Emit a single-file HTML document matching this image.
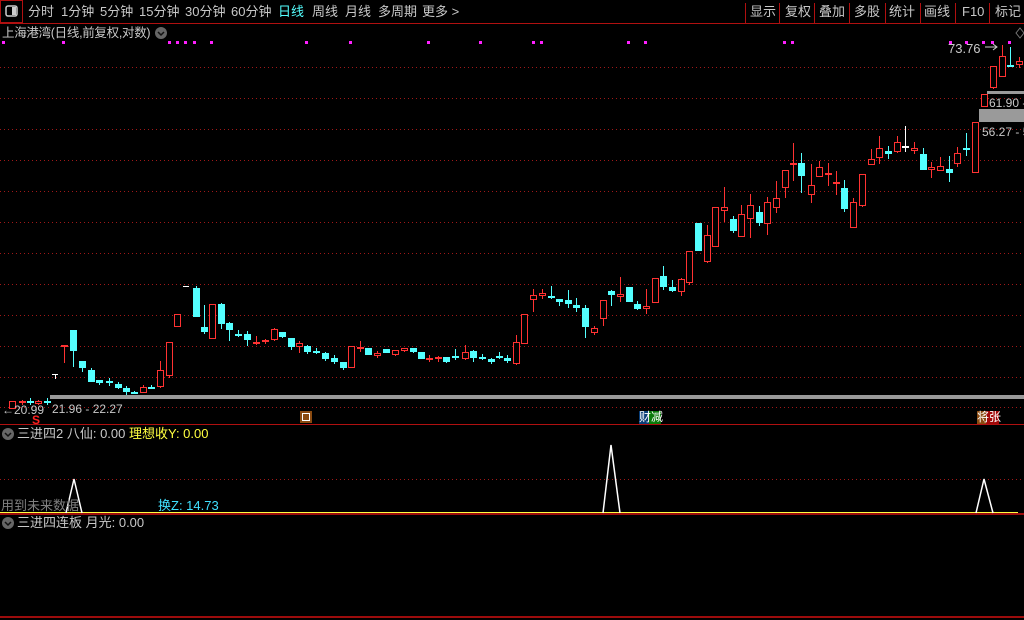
<!DOCTYPE html>
<html><head><meta charset="utf-8"><style>
html,body{margin:0;padding:0;background:#000;width:1024px;height:620px;overflow:hidden}
body{position:relative;font-family:"Liberation Sans","Noto Sans CJK SC",sans-serif;font-size:12px;color:#c8c8c8}
.t{position:absolute;white-space:nowrap;line-height:14px}
.m{top:5px;font-size:13px;color:#c8c8c8}
svg{position:absolute;left:0;top:0}
</style></head><body>
<svg width="1024" height="620" id="s" xmlns="http://www.w3.org/2000/svg">
<g stroke="#a01818" stroke-width="1" stroke-dasharray="1,3">
<line x1="0" y1="67.5" x2="1024" y2="67.5"/><line x1="0" y1="98.5" x2="1024" y2="98.5"/>
<line x1="0" y1="129.5" x2="1024" y2="129.5"/><line x1="0" y1="160.5" x2="1024" y2="160.5"/>
<line x1="0" y1="191.5" x2="1024" y2="191.5"/><line x1="0" y1="222.5" x2="1024" y2="222.5"/>
<line x1="0" y1="253.5" x2="1024" y2="253.5"/><line x1="0" y1="284.5" x2="1024" y2="284.5"/>
<line x1="0" y1="315.5" x2="1024" y2="315.5"/><line x1="0" y1="346.5" x2="1024" y2="346.5"/>
<line x1="0" y1="377.5" x2="1024" y2="377.5"/><line x1="0" y1="407.5" x2="1024" y2="407.5"/>
<line x1="0" y1="479.5" x2="1024" y2="479.5"/>
</g>
<line x1="0" y1="23.5" x2="1024" y2="23.5" stroke="#b01010"/>
<rect x="0.5" y="0.5" width="22" height="22" fill="none" stroke="#b01010"/>
<rect x="6" y="6" width="11" height="10" rx="2" fill="none" stroke="#ccc" stroke-width="1.5"/>
<rect x="12" y="7" width="4" height="8" fill="#ccc"/>
<g stroke="#b01010"><line x1="745.5" y1="3" x2="745.5" y2="23"/><line x1="779.5" y1="3" x2="779.5" y2="23"/><line x1="814.5" y1="3" x2="814.5" y2="23"/><line x1="849.5" y1="3" x2="849.5" y2="23"/><line x1="885.5" y1="3" x2="885.5" y2="23"/><line x1="920.5" y1="3" x2="920.5" y2="23"/><line x1="955.5" y1="3" x2="955.5" y2="23"/><line x1="989.5" y1="3" x2="989.5" y2="23"/></g>
<circle cx="161" cy="33" r="6" fill="#666"/><path d="M158 32l3 3 3-3" stroke="#111" fill="none" stroke-width="1.5"/>
<path d="M1020 28l4 5-4 5-4-5z" fill="none" stroke="#777"/>
<rect x="50" y="395" width="974" height="4" fill="#9a9a9a"/>
<rect x="987" y="91" width="37" height="3" fill="#9a9a9a"/>
<rect x="979" y="109" width="45" height="13" fill="#9a9a9a"/>
<line x1="0" y1="424.5" x2="1024" y2="424.5" stroke="#b01010"/>
<line x1="0" y1="512.5" x2="1018" y2="512.5" stroke="#ffff40"/>
<line x1="0" y1="514" x2="1024" y2="514" stroke="#d01010" stroke-width="1.5"/>
<line x1="0" y1="617" x2="1024" y2="617" stroke="#d01010" stroke-width="1.5"/>
<g stroke="#fff" fill="none" stroke-width="1.5"><path d="M66 513L74 479L82 513"/><path d="M603 513L611 445L620 513"/><path d="M976 513L984 479L993 513"/></g>
<circle cx="8" cy="434" r="6" fill="#666"/><path d="M5 433l3 3 3-3" stroke="#111" fill="none" stroke-width="1.5"/>
<circle cx="8" cy="523" r="6" fill="#666"/><path d="M5 522l3 3 3-3" stroke="#111" fill="none" stroke-width="1.5"/>
<rect x="300" y="411" width="12" height="12" fill="#8a4a10"/><rect x="302.5" y="413.5" width="7" height="7" fill="none" stroke="#fff"/>
<rect x="639" y="411" width="10" height="13" fill="#0a3e78"/><rect x="649" y="411" width="12" height="13" fill="#0a7a0a"/>
<rect x="977" y="411" width="9" height="13" fill="#8a4a10"/><rect x="986" y="411" width="13" height="13" fill="#a00808"/>
<path d="M985 47h12m-4-3l4 3-4 3" stroke="#ccc" fill="none"/>
<g id="c"></g>
</svg>
<span class="t m" style="left:28px">分时</span>
<span class="t m" style="left:61px">1分钟</span>
<span class="t m" style="left:100px">5分钟</span>
<span class="t m" style="left:139px">15分钟</span>
<span class="t m" style="left:185px">30分钟</span>
<span class="t m" style="left:231px">60分钟</span>
<span class="t m" style="left:278px;color:#54ffff">日线</span>
<span class="t m" style="left:312px">周线</span>
<span class="t m" style="left:345px">月线</span>
<span class="t m" style="left:378px">多周期</span>
<span class="t m" style="left:422px">更多 &gt;</span>
<span class="t m" style="left:750px">显示</span>
<span class="t m" style="left:785px">复权</span>
<span class="t m" style="left:819px">叠加</span>
<span class="t m" style="left:854px">多股</span>
<span class="t m" style="left:889px">统计</span>
<span class="t m" style="left:924px">画线</span>
<span class="t m" style="left:962px">F10</span>
<span class="t m" style="left:995px">标记</span>
<span class="t" style="left:2px;top:26px;font-size:12.5px;letter-spacing:-0.3px">上海港湾(日线,前复权,对数)</span>
<span class="t" style="left:948px;top:42px;font-size:13px">73.76</span>
<span class="t" style="left:989px;top:96px;font-size:12px">61.90 -</span>
<span class="t" style="left:982px;top:125px;font-size:12px">56.27 - 5</span>
<span class="t" style="left:52px;top:402px">21.96 - 22.27</span>
<span class="t" style="left:2px;top:403px">←20.99</span>
<span class="t" style="left:32px;top:413px;color:#ff2020;font-weight:bold">S</span>
<span class="t" style="left:639px;top:410px;color:#fff">财减</span>
<span class="t" style="left:977px;top:410px;color:#fff">将张</span>
<span class="t" style="left:17px;top:427px;font-size:13px">三进四2 八仙: 0.00 <span style="color:#ffff40">理想收Y: 0.00</span></span>
<span class="t" style="left:1px;top:499px;font-size:13px;color:#808080">用到未来数据</span>
<span class="t" style="left:158px;top:499px;font-size:13px;color:#40e0ff">换Z: 14.73</span>
<span class="t" style="left:17px;top:516px;font-size:13px">三进四连板 月光: 0.00</span>
<script>
var k=1.0142,A=[[63,'r',345,347,345,363],[72,'c',330,351,330,367],[81,'c',361,368,361,372],[90,'c',370,382,368,382],[98,'c',380,383,380,385],[107,'c',381,383,378,386],[116,'c',384,388,382,389],[124,'c',388,392,386,395],[132,'c',392,393,391,394],[141,'r',387,393,385,393],[149,'c',387,388,385,389],[158,'r',370,387,361,388],[167,'r',342,376,342,378],[175,'r',314,327,314,327],[193,'c',288,317,286,317],[201,'c',327,332,305,334],[209,'r',304,339,304,339],[218,'c',304,324,303,329],[226,'c',323,330,322,341],[235,'c',334,336,330,337],[244,'c',334,340,331,346],[252,'r',342,344,336,345],[261,'r',340,342,339,344],[270,'r',329,340,328,341],[278,'c',332,337,332,338],[287,'c',338,347,338,350],[295,'r',343,347,341,353],[303,'c',346,352,345,354],[312,'c',351,353,348,354],[320,'c',353,359,352,361],[329,'c',358,362,355,364],[338,'c',362,368,362,370],[346,'r',346,368,346,368],[355,'r',347,349,341,352],[363,'c',348,355,348,355],[372,'r',353,356,351,358],[381,'c',349,353,349,353],[389,'r',350,355,350,356],[398,'r',348,351,348,352],[407,'c',348,352,348,353],[415,'c',352,359,352,359],[423,'r',358,360,355,362],[432,'r',357,359,356,362],[440,'c',357,362,357,363],[449,'c',356,357,349,360],[458,'r',352,359,345,360],[466,'c',351,358,350,362],[475,'c',357,359,354,360],[484,'c',359,362,358,364],[492,'c',356,358,352,359],[500,'c',358,361,355,363],[509,'r',342,364,335,365],[517,'r',314,344,314,344]];
var B=[[533,'r',295,300,289,312],[542,'r',293,296,289,299],[551,'c',296,298,286,299],[559,'c',299,302,299,306],[568,'c',300,304,290,308],[576,'c',305,308,298,312],[585,'c',308,327,305,338],[594,'r',328,333,326,335],[603,'r',300,319,300,326],[611,'c',291,295,290,306],[620,'r',294,297,277,302],[629,'c',287,302,287,302],[637,'c',304,309,301,310],[646,'r',306,309,289,314],[655,'r',278,303,278,303],[663,'c',276,287,266,290],[672,'c',287,291,280,292],[681,'r',279,292,278,296],[689,'r',251,283,251,285],[698,'c',223,251,223,251],[707,'r',235,262,225,263],[715,'r',207,247,207,247],[724,'r',207,211,187,222],[733,'c',219,231,216,233],[741,'r',214,237,205,237],[750,'r',205,219,194,238],[759,'c',212,223,206,226],[767,'r',202,224,197,235],[776,'r',198,208,181,213],[785,'r',170,188,170,198],[793,'r',163,165,143,181],[801,'c',163,176,153,193],[811,'r',185,195,164,203],[819,'r',167,177,161,177],[828,'r',173,175,163,186],[836,'r',182,184,171,195],[844,'c',188,209,180,212],[853,'r',202,228,198,228],[862,'r',174,206,174,207],[871,'r',159,165,149,165],[879,'r',148,158,136,164],[888,'c',151,154,146,159],[897,'r',142,152,136,153],[905,'w',146,147,126,152],[914,'r',148,151,142,154],[923,'c',154,170,148,170],[931,'r',167,170,162,178],[940,'r',166,171,157,171],[949,'c',169,173,156,182],[957,'r',153,164,147,167],[966,'c',148,150,133,156],[975,'r',122,173,122,173],[984,'r',94,107,94,107],[993,'r',66,88,66,89],[1002,'r',56,77,45,77],[1010,'c',65,67,47,67],[1019,'r',61,65,57,68],[12,'r',401,409,401,409],[22,'r',401,403,400,405],[30,'c',401,402,398,405],[38,'r',401,404,400,405],[47,'c',401,402,398,405]];
A.forEach(function(d){d[0]=d[0]*k});
var s='',C=A.concat(B);
C.forEach(function(d){var x=Math.round(d[0]),col=d[1]=='r'?'#ff3232':d[1]=='c'?'#54ffff':'#ffffff';
var h=Math.max(d[3]-d[2],1);
s+='<line x1="'+(x+.5)+'" y1="'+d[4]+'" x2="'+(x+.5)+'" y2="'+d[5]+'" stroke="'+col+'"/>';
if(d[1]=='r'&&h>2)s+='<rect x="'+(x-2.5)+'" y="'+(d[2]+.5)+'" width="6" height="'+(h-1)+'" fill="#000" stroke="'+col+'"/>';
else s+='<rect x="'+(x-3)+'" y="'+d[2]+'" width="7" height="'+Math.max(h,2)+'" fill="'+col+'"/>';});
[3,63,169,177,185,194,211,306,350,428,480,533,541,628,645,784,792,950,966,983,992,1009].forEach(function(x){s+='<rect x="'+(x-1)+'" y="41" width="3" height="3" fill="#ff20ff"/>'});
s+='<line x1="183" y1="286.5" x2="189" y2="286.5" stroke="#fff"/><line x1="52" y1="374.5" x2="58" y2="374.5" stroke="#fff"/><line x1="55.5" y1="374" x2="55.5" y2="379" stroke="#fff"/>';
document.getElementById('c').innerHTML=s;
</script>
</body></html>
